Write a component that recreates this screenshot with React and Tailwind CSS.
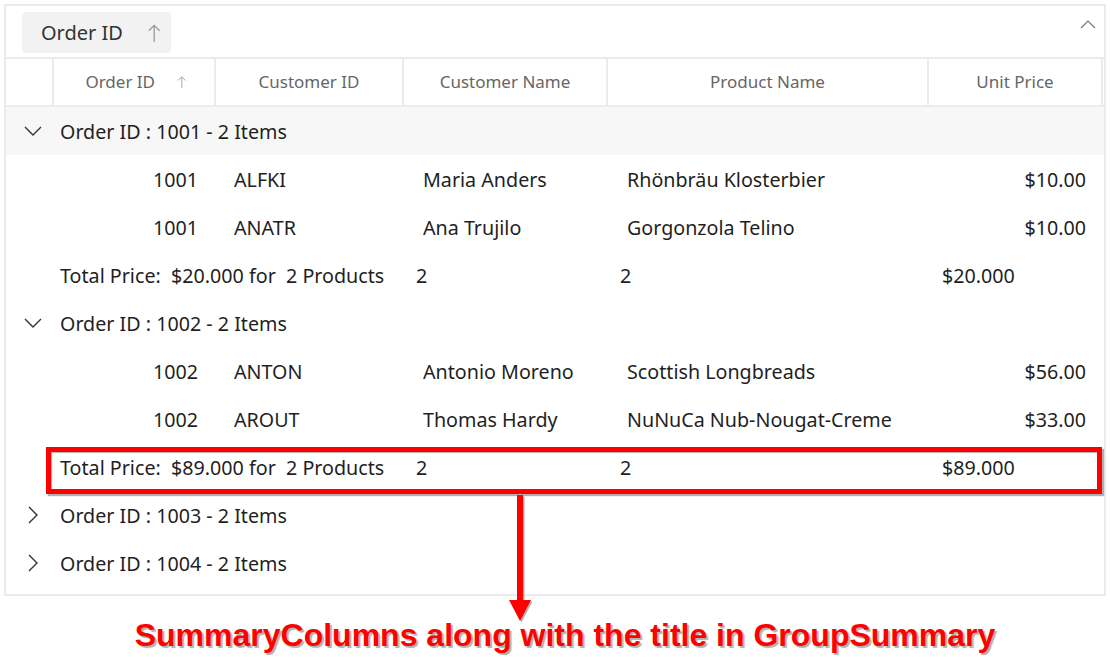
import React from "react";

const FONT = { fontFamily: '"Noto Sans", "Open Sans", sans-serif' };

function ChevronDown() {
  return (
    <svg width="18" height="10" viewBox="0 0 18 10" fill="none">
      <path d="M1 1 L9 9 L17 1" stroke="#333" strokeWidth="1.4" />
    </svg>
  );
}
function ChevronRight() {
  return (
    <svg width="10" height="18" viewBox="0 0 10 18" fill="none">
      <path d="M1 1 L9 9 L1 17" stroke="#333" strokeWidth="1.4" />
    </svg>
  );
}
function ArrowUp({ size = 12, color = "#888" }) {
  return (
    <svg width={size * 0.8} height={size} viewBox="0 0 10 14" fill="none">
      <path d="M5 14 V1 M0.8 5.2 L5 1 L9.2 5.2" stroke={color} strokeWidth="1" />
    </svg>
  );
}

const cols = "grid grid-cols-[48px_162px_188px_204px_321px_174px]";

function GroupHeader({ label, expanded, shaded }) {
  return (
    <div className={`flex h-[48px] items-center ${shaded ? "bg-[#f7f7f7]" : ""}`}>
      <div className="flex w-[48px] justify-center pl-[5px]">
        {expanded ? <ChevronDown /> : <ChevronRight />}
      </div>
      <div className="pl-[6px] pt-[2px] text-[19.7px] text-[#1f1f1f]">{label}</div>
    </div>
  );
}

function DataRow({ r }) {
  return (
    <div className={`${cols} h-[48px] items-center pt-[2px] text-[19.7px] text-[#1f1f1f]`}>
      <div />
      <div className="pr-[18px] text-right">{r[0]}</div>
      <div className="pl-[18px]">{r[1]}</div>
      <div className="pl-[19px]">{r[2]}</div>
      <div className="pl-[19px]">{r[3]}</div>
      <div className="pr-[17px] text-right">{r[4]}</div>
    </div>
  );
}

function SummaryRow({ price }) {
  return (
    <div className={`${cols} h-[48px] items-center pt-[2px] text-[19.7px] text-[#1f1f1f]`}>
      <div />
      <div className="col-span-2 whitespace-pre pl-[6px]">{`Total Price:  ${price} for  2 Products`}</div>
      <div className="pl-[12px]">2</div>
      <div className="pl-[12px]">2</div>
      <div className="pl-[13px]">{price}</div>
    </div>
  );
}

export default function App() {
  return (
    <div className="relative h-[660px] w-[1110px] bg-white" style={FONT}>
      <div className="ml-[4px] mt-[4px] flex h-[592px] w-[1102px] flex-col border-2 border-[#ebebeb]">
        {/* group drop area */}
        <div className="flex h-[53px] items-start justify-between border-b-2 border-[#ebebeb] pl-[16px] pr-[8px] pt-[6px]">
          <div className="flex h-[41px] w-[149px] items-center gap-[24px] rounded-[4px] bg-[#f2f2f2] pl-[19px] text-[20px] text-[#333]">
            <span>Order ID</span>
            <ArrowUp size={18} color="#999" />
          </div>
          <svg className="mt-[7px]" width="16" height="10" viewBox="0 0 16 10" fill="none">
            <path d="M1 9 L8 2 L15 9" stroke="#777" strokeWidth="1.2" />
          </svg>
        </div>
        {/* column header */}
        <div className={`${cols} h-[48px] border-b-2 border-[#ebebeb] text-[17px] text-[#666]`}>
          <div className="border-r-2 border-[#ebebeb]" />
          <div className="flex items-center justify-center gap-[22px] border-r-2 border-[#ebebeb] pl-[4px]">
            <span>Order ID</span>
            <ArrowUp size={12} color="#999" />
          </div>
          <div className="flex items-center justify-center border-r-2 border-[#ebebeb]">Customer ID</div>
          <div className="flex items-center justify-center border-r-2 border-[#ebebeb]">Customer Name</div>
          <div className="flex items-center justify-center border-r-2 border-[#ebebeb]">Product Name</div>
          <div className="flex items-center justify-center border-r-2 border-[#ebebeb]">Unit Price</div>
        </div>
        <GroupHeader label="Order ID : 1001 - 2 Items" expanded shaded />
        <DataRow r={["1001", "ALFKI", "Maria Anders", "Rhönbräu Klosterbier", "$10.00"]} />
        <DataRow r={["1001", "ANATR", "Ana Trujilo", "Gorgonzola Telino", "$10.00"]} />
        <SummaryRow price="$20.000" />
        <GroupHeader label="Order ID : 1002 - 2 Items" expanded />
        <DataRow r={["1002", "ANTON", "Antonio Moreno", "Scottish Longbreads", "$56.00"]} />
        <DataRow r={["1002", "AROUT", "Thomas Hardy", "NuNuCa Nub-Nougat-Creme", "$33.00"]} />
        <SummaryRow price="$89.000" />
        <GroupHeader label="Order ID : 1003 - 2 Items" />
        <GroupHeader label="Order ID : 1004 - 2 Items" />
      </div>

      <div
        className="mt-[19px] pl-[20px] text-center text-[32px] font-bold leading-[40px] text-[#ff0000]"
        style={{ fontFamily: '"Liberation Sans", Arial, sans-serif', textShadow: "2px 2px 1px #b0b0b0" }}
      >
        SummaryColumns along with the title in GroupSummary
      </div>

      {/* annotation: red box */}
      <div
        className="absolute left-[46px] top-[443px] h-[47px] w-[1056px] border-[5px] border-[#ff0000]"
        style={{ boxShadow: "2px 2px 1px #b0b0b0, inset 1px 1px 1px #b0b0b0" }}
      />
      {/* annotation: arrow */}
      <svg className="absolute left-[506px] top-[489px]" width="32" height="133" viewBox="0 0 32 133">
        <g transform="translate(1.5,1.5)" fill="#b0b0b0">
          <rect x="11" y="2" width="6" height="107" />
          <path d="M3 107 L25 107 L14 128 Z" />
        </g>
        <g fill="#ff0000">
          <rect x="11" y="2" width="6" height="107" />
          <path d="M3 107 L25 107 L14 128 Z" />
        </g>
      </svg>
    </div>
  );
}
